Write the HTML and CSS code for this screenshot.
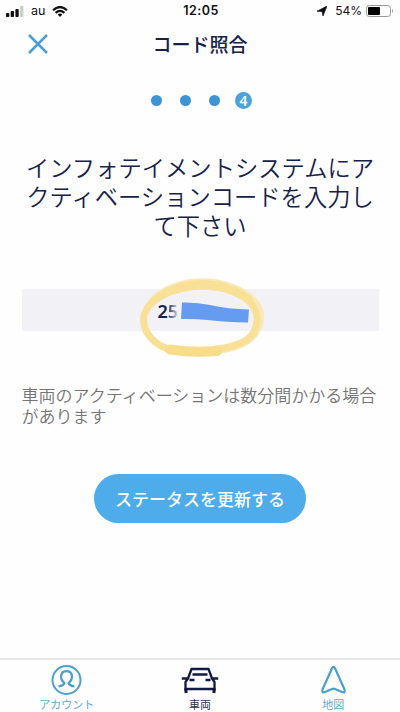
FILE: index.html
```html
<!DOCTYPE html>
<html lang="ja">
<head>
<meta charset="utf-8">
<title>コード照合</title>
<link rel="stylesheet" href="styles.css">
</head>
<body>
<div class="screen">
  <div class="status">
    <div class="status-left">
      <svg width="18" height="11" viewBox="0 0 18 11"><g fill="#111"><rect x="0" y="7" width="3.3" height="4" rx=".8"/><rect x="4.7" y="5" width="3.3" height="6" rx=".8"/><rect x="9.4" y="3" width="3.3" height="8" rx=".8"/></g><rect x="14.1" y="0" width="3.3" height="11" rx=".8" fill="#ccc"/></svg>
      <span class="carrier">au</span>
      <svg width="16" height="11" viewBox="0 0 16 11" fill="none" stroke="#111" stroke-width="2.2"><path d="M1 4.2Q8-2.2 15 4.2M3.6 6.9Q8 3 12.4 6.9"/><path d="M5.6 8.4Q8 6.4 10.4 8.4L8 11Z" fill="#111" stroke="none"/></svg>
    </div>
    <span class="time">12:05</span>
    <div class="status-right">
      <svg width="10" height="10" viewBox="0 0 10 10"><path d="M0 5.2 10 0 6 10 5 5.500Z" fill="#111" stroke="#111" stroke-width=".7"/></svg>
      <span class="percent">54%</span>
      <svg width="28" height="12" viewBox="0 0 28 12"><rect x=".5" y=".5" width="24" height="11" rx="2.8" fill="none" stroke="#999"/><rect x="2" y="2" width="12" height="8" rx="1" fill="#000"/><path d="M26 4Q28 6 26 8Z" fill="#999"/></svg>
    </div>
  </div>
  <header class="header">
    <svg class="close" width="20" height="20" viewBox="0 0 20 20"><path d="M1 1 19 19M19 1 1 19" stroke="#4a9fd8" stroke-width="2.500"/></svg>
    <h1 class="title">コード照合</h1>
  </header>
  <div class="steps">
    <span class="dot"></span><span class="dot"></span><span class="dot"></span><span class="step">4</span>
  </div>
  <h2 class="lead">インフォテイメントシステムにア<br>クティベーションコードを入力し<br>て下さい</h2>
  <div class="code">
    <span class="digits">2<span class="faded">5</span></span>
    <svg class="marker" width="130" height="90" viewBox="0 0 130 90">
      <path d="M44 27.500Q58 27 72 30Q90 34 111 34.500L110 47.500Q88 47 70 45Q56 43.500 43 44Z" fill="#659cf0"/>
      <g fill="none" stroke-linecap="round" stroke-linejoin="round">
        <path d="M7 36C14 17 38 5.500 65 5.500C96 6 124 22 124 42C122 66 103 74 78 77" stroke-width="4.500" stroke="#fae9b8"/>
        <path d="M80 75Q57 79 37 76C17 72 3 57 6 40C11 24 34 12 64 11C94 12 119 24 119 44C119 62 106 71 78 74" stroke-width="7" stroke="#f8e097"/>
        <path d="M16 25C34 12 48 8.500 64 8.500C84 9 98 14 111 24" stroke-width="7" stroke="#f8e097"/>
        <path d="M32 74.500Q54 78 79 76" stroke-width="10" stroke="#f7dc8a"/>
      </g>
    </svg>
  </div>
  <p class="note">車両のアクティベーションは数分間かかる場合<br>があります</p>
  <button class="refresh">ステータスを更新する</button>
  <nav class="tabs">
    <div class="tab">
      <svg width="32" height="32" viewBox="0 0 32 32" fill="none" stroke="#4b9fcf" stroke-width="2"><circle cx="15.500" cy="16" r="14"/><path d="M7.500 22.300Q13 21.500 13.300 19C8 14 9.500 7.200 15.500 7.200S23 14 17.700 19Q18 21.500 23.500 22.300" stroke-width="2.300"/></svg>
      <span>アカウント</span>
    </div>
    <div class="tab active">
      <svg width="38" height="32" viewBox="0 0 38 32" fill="none" stroke="#121b43" stroke-width="2.300" stroke-linejoin="round"><path d="M4.500 27V18L7 14.500 10.500 5H27.500L31 14.500 33.500 18V27M4.500 25H33.500M0.800 14.500H6.500M31.500 14.500H37.200M11.500 10.500H26.500M8.500 16H13.500M24.500 16H29.500"/><path d="M5 24V29M33 24V29" stroke-width="3"/></svg>
      <span>車両</span>
    </div>
    <div class="tab">
      <svg width="32" height="32" viewBox="0 0 32 32" fill="none" stroke="#4b9fcf" stroke-width="2.200" stroke-linejoin="round"><path d="M15 4.300Q16.500 1.500 18 4.300L27.500 25.500Q28.700 29.500 25 28L18 25Q16.500 24.400 15 25L8 28Q4.300 29.500 5.500 25.500Z"/></svg>
      <span>地図</span>
    </div>
  </nav>
</div>
</body>
</html>
```

FILE: styles.css
```css
* { box-sizing: border-box; }
body { margin: 0; background: #fefefe; font-family: "Noto Sans CJK JP", sans-serif; color: #17224b; }
svg { display: block; flex: none; }
.screen { height: 712px; display: flex; flex-direction: column; overflow: hidden; }
.status { height: 22px; padding: 0 6px; display: grid; grid-template-columns: 1fr auto 1fr; align-items: center; font: 12px/22px Inter, sans-serif; color: #111; flex: none; }
.status-left, .status-right { display: flex; align-items: center; }
.status-left { gap: 7px; }
.status-right { justify-content: flex-end; gap: 4px; }
.carrier { font-size: 12.5px; }
.percent { margin-left: 4px; }
.time { font-weight: 600; font-size: 12.5px; letter-spacing: .5px; padding-left: 2px; }
.header { height: 44px; display: flex; align-items: center; padding: 0 28px; flex: none; }
.title { flex: 1; margin: 0 20px 0 0; text-align: center; font-size: 19px; line-height: 28px; font-weight: 500; }
.steps { display: flex; align-items: center; gap: 18px; height: 20px; margin: 24px 0 0 151px; flex: none; }
.dot { width: 11px; height: 11px; border-radius: 50%; background: #3d94d3; }
.step { width: 17px; height: 17px; margin-left: -3px; border-radius: 50%; background: #4ba3dc; color: #fff; font: 600 14px/17px "Noto Sans", sans-serif; text-align: center; }
.lead { margin: 43px 0 0; text-align: center; font-weight: 350; font-size: 23.3px; line-height: 28.8px; white-space: nowrap; flex: none; }
.code { position: relative; margin: 50px 21.5px 0; height: 42px; background: #f1f1f6; flex: none; }
.digits { display: block; padding: 1px 0 0 136px; font: 600 18px/42px "Noto Sans", sans-serif; }
.faded { color: transparent; background: linear-gradient(90deg, #4a5070 20%, #c5c7d6 90%); -webkit-background-clip: text; background-clip: text; }
.marker { position: absolute; left: 116px; top: -14px; }
.note { margin: 54px 21.5px 0; font-size: 17px; line-height: 20.5px; color: #757575; font-weight: 350; white-space: nowrap; flex: none; }
.refresh { width: 212px; height: 49px; margin: 48px auto 0; padding: 0; border: 0; border-radius: 25px; background: #4eacea; color: #fff; font: 500 17px/48px "Noto Sans CJK JP", sans-serif; white-space: nowrap; flex: none; }
.tabs { height: 54px; margin-top: auto; border-top: 2px solid #e7e7e7; display: grid; grid-template-columns: repeat(3, 1fr); flex: none; }
.tab { display: flex; flex-direction: column; align-items: center; padding-top: 4px; font-size: 11px; line-height: 16px; color: #62a8cf; }
.active { color: #2c3350; }
```
